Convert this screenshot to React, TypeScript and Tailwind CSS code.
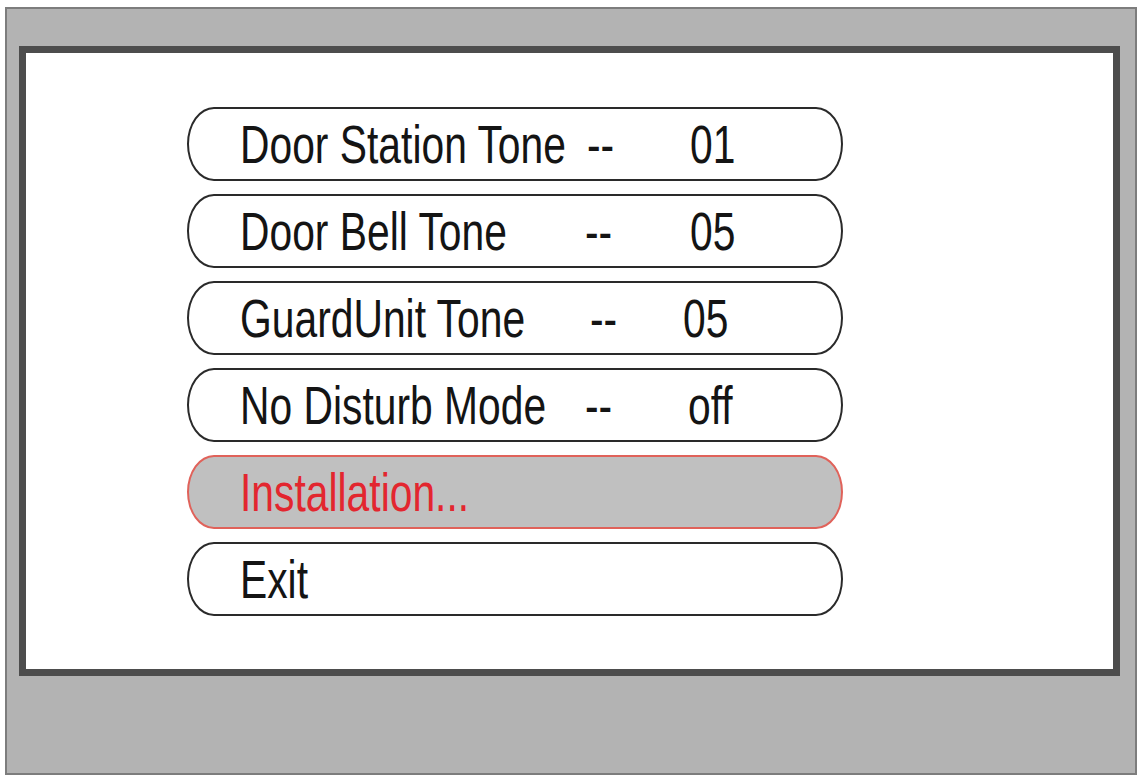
const rows = [
  { label: "Door Station Tone", dash: "ml-[1px]", value: "01", val: "ml-0" },
  { label: "Door Bell Tone", dash: "ml-[-1px]", value: "05", val: "ml-0" },
  { label: "GuardUnit Tone", dash: "ml-[4px]", value: "05", val: "ml-[-7px]" },
  { label: "No Disturb Mode", dash: "ml-[-1px]", value: "off", val: "ml-[-2px]" },
];

function Narrow({ children, className = "" }: { children: React.ReactNode; className?: string }) {
  return (
    <span className={`inline-block origin-left scale-x-[0.77] whitespace-pre ${className}`}>
      {children}
    </span>
  );
}

const pill = "flex h-[74px] w-[656px] items-center rounded-[27px/37px] border-2 pl-[51px]";

export default function App() {
  return (
    <div className="h-[778px] w-[1140px] bg-white pl-[5px] pt-[7px] font-['Liberation_Sans',Arial,sans-serif]">
      <div className="h-[768px] w-[1132px] border-2 border-[#7d7d7d] bg-[#b3b3b3] pl-[12px] pt-[37px]">
        <div className="h-[630px] w-[1101px] border-[7px] border-[#4d4d4d] bg-white pl-[161px] pt-[54px]">
          <div className="flex flex-col gap-[13px] text-[53px] leading-none text-[#141414]">
            {rows.map((r) => (
              <div key={r.label} className={`${pill} border-[#2a2a2a] bg-white`}>
                <div className="w-[346px]">
                  <Narrow>{r.label}</Narrow>
                </div>
                <div className="w-[104px]">
                  <Narrow className={r.dash}>--</Narrow>
                </div>
                <div>
                  <Narrow className={r.val}>{r.value}</Narrow>
                </div>
              </div>
            ))}
            <div className={`${pill} border-[#e0625a] bg-[#c0c0c0]`}>
              <Narrow className="text-[#e3262f]">Installation...</Narrow>
            </div>
            <div className={`${pill} border-[#2a2a2a] bg-white`}>
              <Narrow>Exit</Narrow>
            </div>
          </div>
        </div>
      </div>
    </div>
  );
}
